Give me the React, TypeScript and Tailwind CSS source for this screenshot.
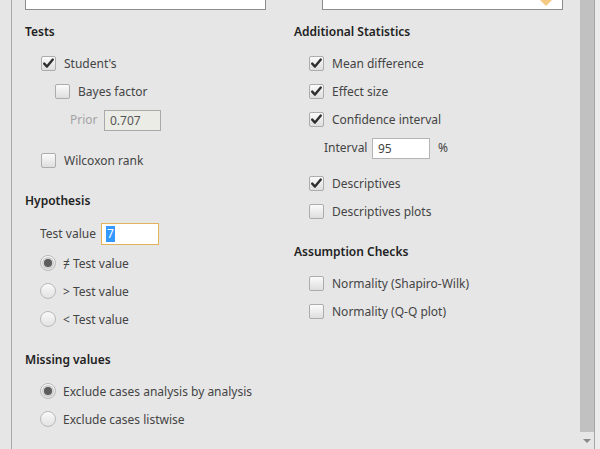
import React from 'react';

const font = { fontFamily: '"Noto Sans", "Open Sans", sans-serif' };

function CheckBox({ checked }: { checked?: boolean }) {
  return (
    <div className="relative w-[15px] h-[15px] shrink-0 rounded-[2px] border border-[#acacac] bg-gradient-to-b from-[#fbfbfb] to-[#dedede]">
      {checked && (
        <svg viewBox="0 0 15 15" className="absolute -left-px -top-px w-[15px] h-[15px]">
          <path d="M3.2 7.6 L6 10.6 L11.8 3.6" fill="none" stroke="#2e2e2e" strokeWidth="2.4" strokeLinecap="round" strokeLinejoin="round" />
        </svg>
      )}
    </div>
  );
}

function Radio({ checked }: { checked?: boolean }) {
  return (
    <div className="w-[16px] h-[16px] shrink-0 rounded-full border border-[#b9b9b9] bg-gradient-to-b from-[#fafafa] to-[#e2e2e2] flex items-center justify-center">
      {checked && <div className="w-[8px] h-[8px] rounded-full bg-[#5c5c5c] ring-2 ring-[#cfcfcf]" />}
    </div>
  );
}

function CheckRow({ label, checked, indent }: { label: string; checked?: boolean; indent: string }) {
  return (
    <div className={`h-[28px] flex items-center gap-[8px] ${indent}`}>
      <CheckBox checked={checked} />
      <span className="relative top-[1px] text-[12px] text-[#444]">{label}</span>
    </div>
  );
}

function RadioRow({ label, checked }: { label: string; checked?: boolean }) {
  return (
    <div className="h-[28px] flex items-center gap-[7px] pl-[15px]">
      <Radio checked={checked} />
      <span className="relative top-[1px] text-[12px] text-[#444]">{label}</span>
    </div>
  );
}

function Header({ children, className = '' }: { children: React.ReactNode; className?: string }) {
  return <div className={`h-[20px] leading-[20px] text-[12px] font-semibold text-[#222] ${className}`}>{children}</div>;
}

export default function App() {
  return (
    <div className="w-[600px] h-[449px] overflow-hidden bg-[#e6e6e6] flex" style={font}>
      <div className="w-[580px] h-full flex pl-[11px]">
        <div className="flex-1 h-full border-l border-[#a9a9a9] pl-[13px] flex">
          {/* left column */}
          <div className="w-[269px] flex flex-col">
            <div className="h-[10px] w-[241px] bg-white border-x border-b border-[#8c8c8c]" />
            <Header className="mt-[12px]">Tests</Header>
            <div className="mt-[7px]">
              <CheckRow label="Student's" checked indent="pl-[16px]" />
              <CheckRow label="Bayes factor" indent="pl-[30px]" />
            </div>
            <div className="h-[28px] mt-[1px] flex items-center pl-[45px]">
              <span className="w-[34px] text-[12px] text-[#a4a4a4]">Prior</span>
              <div className="w-[57px] h-[21px] border border-[#a9a9a9] bg-[#ececE6] text-[12px] text-[#555] leading-[19px] px-[5px]">0.707</div>
            </div>
            <div className="mt-[12px]">
              <CheckRow label="Wilcoxon rank" indent="pl-[16px]" />
            </div>
            <Header className="mt-[17px]">Hypothesis</Header>
            <div className="h-[28px] mt-[9px] flex items-center pl-[15px]">
              <span className="w-[61px] text-[12px] text-[#444]">Test value</span>
              <div className="w-[58px] h-[22px] border border-[#e2b35c] bg-white flex items-center px-[4px]">
                <span className="bg-[#3399ff] text-white text-[12px] leading-[16px] px-[1px]">7</span>
              </div>
            </div>
            <div className="mt-[1px]">
              <RadioRow label="≠ Test value" checked />
              <RadioRow label="> Test value" />
              <RadioRow label="< Test value" />
            </div>
            <Header className="mt-[17px]">Missing values</Header>
            <div className="mt-[7px]">
              <RadioRow label="Exclude cases analysis by analysis" checked />
              <RadioRow label="Exclude cases listwise" />
            </div>
          </div>
          {/* right column */}
          <div className="flex-1 flex flex-col">
            <div className="h-[10px] ml-[28px] w-[241px] bg-white border-x border-b border-[#8c8c8c] relative">
              <svg viewBox="0 0 12 6" className="absolute left-[217px] top-0 w-[12px] h-[6px]">
                <path d="M0 0 L12 0 L6 6 Z" fill="#f6c982" />
              </svg>
            </div>
            <Header className="mt-[12px]">Additional Statistics</Header>
            <div className="mt-[7px]">
              <CheckRow label="Mean difference" checked indent="pl-[15px]" />
              <CheckRow label="Effect size" checked indent="pl-[15px]" />
              <CheckRow label="Confidence interval" checked indent="pl-[15px]" />
            </div>
            <div className="h-[28px] mt-[1px] flex items-center pl-[30px]">
              <span className="w-[48px] text-[12px] text-[#444]">Interval</span>
              <div className="w-[58px] h-[21px] border border-[#b4b4b4] bg-white text-[12px] text-[#444] leading-[19px] px-[5px]">95</div>
              <span className="ml-[8px] text-[12px] text-[#444]">%</span>
            </div>
            <div className="mt-[7px]">
              <CheckRow label="Descriptives" checked indent="pl-[15px]" />
              <CheckRow label="Descriptives plots" indent="pl-[15px]" />
            </div>
            <Header className="mt-[17px]">Assumption Checks</Header>
            <div className="mt-[7px]">
              <CheckRow label="Normality (Shapiro-Wilk)" indent="pl-[15px]" />
              <CheckRow label="Normality (Q-Q plot)" indent="pl-[15px]" />
            </div>
          </div>
        </div>
      </div>
      {/* scrollbar */}
      <div className="w-[14px] h-full flex flex-col">
        <div className="flex-1 bg-[#c1c1c1]" />
        <div className="h-[17px] flex items-center justify-center">
          <svg viewBox="0 0 8 4" className="w-[8px] h-[4px]">
            <path d="M0 0 L8 0 L4 4 Z" fill="#8a8a8a" />
          </svg>
        </div>
      </div>
      <div className="w-px h-full bg-[#a6a6a6]" />
      <div className="flex-1 h-full bg-[#ececec]" />
    </div>
  );
}
